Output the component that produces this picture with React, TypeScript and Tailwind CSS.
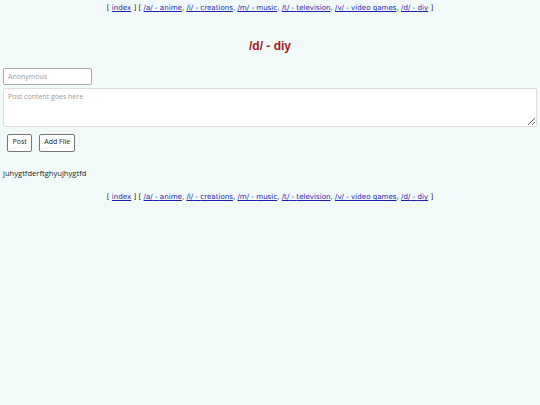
import React from 'react';

const boards = [
  { path: '/a/', name: 'anime' },
  { path: '/i/', name: 'creations' },
  { path: '/m/', name: 'music' },
  { path: '/t/', name: 'television' },
  { path: '/v/', name: 'video games' },
  { path: '/d/', name: 'diy' },
];

const BoardNav: React.FC = () => (
  <div className="text-center text-[7.1px] text-[#222] [font-family:'DejaVu_Sans',sans-serif]">
    [ <a href="#" className="text-[#1d1dab] underline">index</a> ] [{' '}
    {boards.map((b, i) => (
      <React.Fragment key={b.path}>
        <a href="#" className="text-[#1d1dab] underline">
          {b.path} - {b.name}
        </a>
        {i < boards.length - 1 ? ', ' : ' '}
      </React.Fragment>
    ))}
    ]
  </div>
);

const App: React.FC = () => {
  return (
    <div className="min-h-[405px] bg-[#f1faf9] [font-family:'Open_Sans',sans-serif]">
      <div className="pt-[3px]">
        <BoardNav />
      </div>

      <h1 className="mt-[23px] text-center text-[12px] font-bold text-[#a8141c] [font-family:'Liberation_Sans',sans-serif]">
        /d/ - diy
      </h1>

      <form className="mt-[13px] px-[3px]" onSubmit={(e) => e.preventDefault()}>
        <input
          type="text"
          placeholder="Anonymous"
          className="block h-[17px] w-[89px] rounded-[2px] border border-[#aaa] bg-white px-[4px] text-[7px] text-[#333] placeholder-[#999] outline-none"
        />
        <textarea
          placeholder="Post content goes here"
          className="mt-[3px] block h-[39px] w-full rounded-[2px] border border-[#ddd] bg-white px-[4px] py-[3px] text-[7px] text-[#333] placeholder-[#999] outline-none"
        />
        <div className="mt-[7px] flex gap-[7px] pl-[4px]">
          <button type="submit" className="h-[18px] rounded-[2px] border border-[#777] bg-white px-[4.5px] text-[7px] font-medium text-[#222]">
            Post
          </button>
          <button type="button" className="h-[18px] rounded-[2px] border border-[#777] bg-white px-[4px] text-[7px] font-medium text-[#222]">
            Add File
          </button>
        </div>
      </form>

      <div className="mt-[16px] px-[3px] text-[7.6px] text-[#222]">juhygtfderftghyujhygtfd</div>

      <div className="mt-[13px]">
        <BoardNav />
      </div>
    </div>
  );
};

export default App;
